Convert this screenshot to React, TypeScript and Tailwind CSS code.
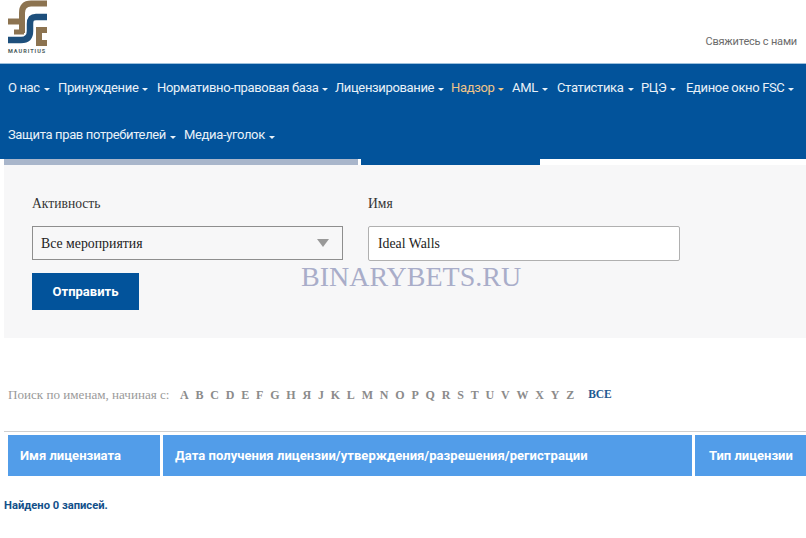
const sans = "font-['Roboto',sans-serif]";
const serif = "font-['Liberation_Serif',serif]";

const row1 = [
  { t: "О нас", w: "w-[50px]" },
  { t: "Принуждение", w: "w-[99px]" },
  { t: "Нормативно-правовая база", w: "w-[178px]" },
  { t: "Лицензирование", w: "w-[116px]" },
  { t: "Надзор", w: "w-[61px]", active: true },
  { t: "AML", w: "w-[45px]" },
  { t: "Статистика", w: "w-[84px]" },
  { t: "РЦЭ", w: "w-[45px]" },
  { t: "Единое окно FSC", w: "w-[112px]" },
];
const row2 = [
  { t: "Защита прав потребителей", w: "w-[176px]" },
  { t: "Медиа-уголок", w: "w-[100px]" },
];
const letters = "A B C D E F G H Я J K L M N O P Q R S T U V W X Y Z".split(" ");

function Logo() {
  return (
    <svg width="48" height="56" viewBox="0 0 48 56" fill="none" className="block">
      <path d="M47 3.5H31C24 3.5 22 8 22 13V33" stroke="#8c7350" strokeWidth="6" />
      <path d="M8 21.5H22" stroke="#8c7350" strokeWidth="6" />
      <path d="M14 32H24" stroke="#8c7350" strokeWidth="5" />
      <path d="M47 17H36C31 17 30 20 30 24V31C30 37 27 40 21 40H8" stroke="#1d4f7c" strokeWidth="6.5" />
      <path d="M47 30H39V43H47" stroke="#8c7350" strokeWidth="6" />
      <text x="8" y="53" fontSize="5.5" fontWeight="700" letterSpacing="1" fill="#4a5a5a" fontFamily="Roboto, sans-serif">MAURITIUS</text>
    </svg>
  );
}

function NavItem({ t, w, active }: { t: string; w: string; active?: boolean }) {
  return (
    <div className={`${w} flex items-center whitespace-nowrap ${active ? "text-[#eec489]" : "text-[#e9f1f8]"}`}>
      <span>{t}</span>
      <span className="ml-[4px] mt-[4px] border-x-[3.5px] border-t-[3px] border-x-transparent border-t-current" />
    </div>
  );
}

export default function App() {
  return (
    <div className={`relative w-[806px] h-[538px] overflow-hidden bg-white ${sans}`}>
      <header className="h-[63px] flex justify-between pr-[9px]">
        <Logo />
        <span className="mt-[35px] text-[11px] leading-[14px] tracking-[-0.2px] text-[#6b6b6b]">Свяжитесь с нами</span>
      </header>
      <nav className="h-[96px] bg-[#02539b] border-t border-[#9dc0dc] pl-[8px] text-[13px] tracking-[-0.35px]">
        <div className="flex h-[47px]">
          {row1.map((i) => <NavItem key={i.t} {...i} />)}
        </div>
        <div className="flex h-[48px]">
          {row2.map((i) => <NavItem key={i.t} {...i} />)}
        </div>
      </nav>
      <div className="flex h-[6px] pl-[4px]">
        <div className="w-[354px] bg-[#a9b6cb]" />
        <div className="ml-[3px] w-[179px] bg-[#02539b]" />
      </div>
      <section className={`ml-[4px] h-[173px] bg-[#f7f7f8] pl-[28px] pt-[31px] ${serif}`}>
        <div className="flex gap-[25px]">
          <div className="w-[311px]">
            <div className="text-[13.6px] leading-[16px] text-[#333]">Активность</div>
            <div className="mt-[14px] h-[34px] border border-[#8e8e8e] flex items-center justify-between pl-[8px] pr-[13px] text-[13.8px] text-[#222]">
              <span className="pt-[2px]">Все мероприятия</span>
              <span className="border-x-[6px] border-t-[8px] border-x-transparent border-t-[#999]" />
            </div>
          </div>
          <div className="w-[312px]">
            <div className="text-[13.6px] leading-[16px] text-[#333]">Имя</div>
            <div className="mt-[14px] h-[35px] bg-white border border-[#b0b0b0] rounded-[2px] flex items-center pl-[9px] pt-[2px] text-[13.8px] text-[#222]">Ideal Walls</div>
          </div>
        </div>
        <button className={`mt-[12px] block w-[107px] h-[37px] bg-[#02539b] text-white text-[13px] font-bold ${sans}`}>Отправить</button>
      </section>
      <div className={`mt-[48px] ml-[8px] h-[18px] flex items-center text-[13.1px] text-[#9a9a9a] ${serif}`}>
        <span className="w-[172px]">Поиск по именам, начиная с:</span>
        <div className="flex font-bold text-[12px] text-[#8b8b8b] gap-[6.8px]">
          {letters.map((l) => <span key={l}>{l}</span>)}
        </div>
        <span className="ml-[14px] font-bold text-[11.5px] text-[#1f5a92]">ВСЕ</span>
      </div>
      <div className="mt-[27px] ml-[4px] border-t border-[#d0d0d0] pt-[3px] pl-[4px] flex gap-[3px] text-white text-[13px] font-bold">
        <div className="w-[152px] h-[41px] bg-[#529de9] flex items-center pl-[12px]">Имя лицензиата</div>
        <div className="w-[529px] h-[41px] bg-[#529de9] flex items-center pl-[12px] tracking-[0.05px]">Дата получения лицензии/утверждения/разрешения/регистрации</div>
        <div className="flex-1 h-[41px] bg-[#529de9] flex items-center pl-[14px] whitespace-nowrap">Тип лицензии</div>
      </div>
      <div className="mt-[23px] ml-[4px] text-[11.2px] leading-[14px] font-bold text-[#12508a]">Найдено 0 записей.</div>
      <div className={`absolute left-[301px] top-[261px] text-[28px] leading-[32px] text-[#a9adc9] ${serif}`}>BINARYBETS.RU</div>
    </div>
  );
}
